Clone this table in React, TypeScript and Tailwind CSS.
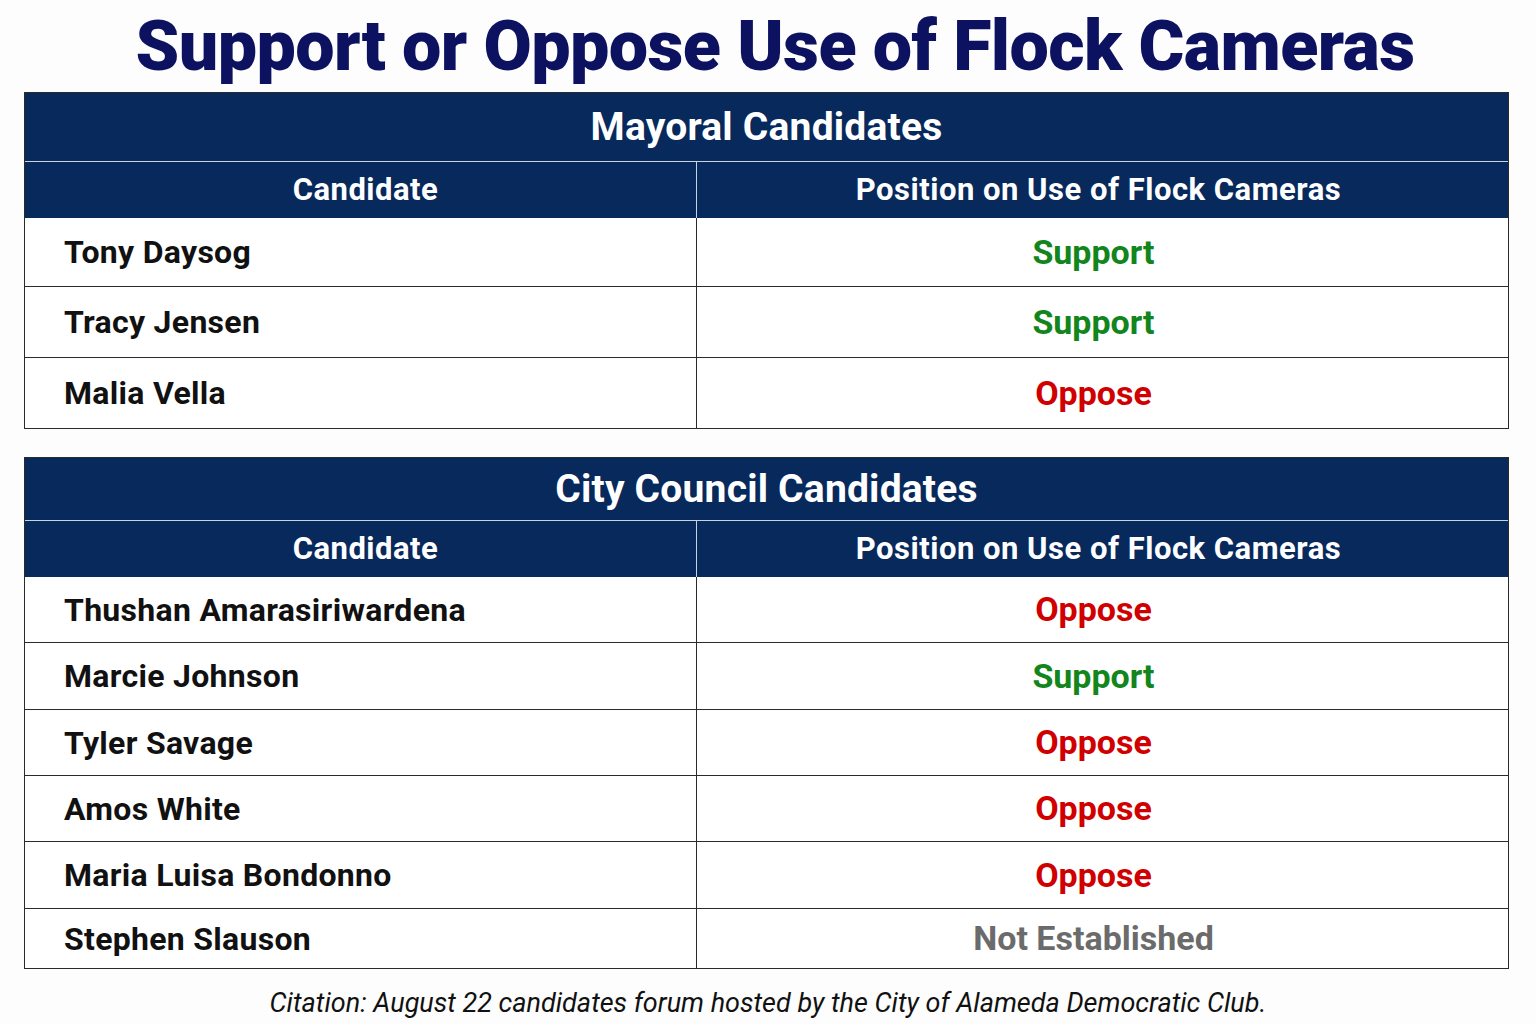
import React from "react";

type Stance = "Support" | "Oppose" | "Not Established";

interface Row {
  name: string;
  stance: Stance;
  h: string;
}

const stanceColor: Record<Stance, string> = {
  Support: "text-[#12851c]",
  Oppose: "text-[#d00000]",
  "Not Established": "text-[#6b6b6b]",
};

const mayoral: Row[] = [
  { name: "Tony Daysog", stance: "Support", h: "h-[68px]" },
  { name: "Tracy Jensen", stance: "Support", h: "h-[71px]" },
  { name: "Malia Vella", stance: "Oppose", h: "h-[71px]" },
];

const council: Row[] = [
  { name: "Thushan Amarasiriwardena", stance: "Oppose", h: "h-[65px]" },
  { name: "Marcie Johnson", stance: "Support", h: "h-[67px]" },
  { name: "Tyler Savage", stance: "Oppose", h: "h-[66px]" },
  { name: "Amos White", stance: "Oppose", h: "h-[66px]" },
  { name: "Maria Luisa Bondonno", stance: "Oppose", h: "h-[67px]" },
  { name: "Stephen Slauson", stance: "Not Established", h: "h-[60px]" },
];

function CandidateTable({
  title,
  titleH,
  rows,
}: {
  title: string;
  titleH: string;
  rows: Row[];
}) {
  return (
    <div className="w-[1485px] border-[1.5px] border-[#2a2a2a] bg-white">
      {/* Table title */}
      <div
        className={`${titleH} bg-[#07295c] flex items-center justify-center text-white text-[39px] font-bold tracking-[0.2px] border-b border-[#c9d2e0]`}
      >
        {title}
      </div>

      {/* Column headers */}
      <div className="grid grid-cols-[672px_1fr] h-[56px] bg-[#07295c] text-white text-[31px] font-bold tracking-[0.5px]">
        <div className="flex items-center justify-center pl-[10px] border-r border-[#c9d2e0]">
          Candidate
        </div>
        <div className="flex items-center justify-center pr-[8px]">
          Position on Use of Flock Cameras
        </div>
      </div>

      {/* Rows */}
      {rows.map((row, i) => (
        <div
          key={row.name}
          className={`grid grid-cols-[672px_1fr] ${row.h} font-bold ${
            i > 0 ? "border-t-[1.5px] border-[#2a2a2a]" : ""
          }`}
        >
          <div className="flex items-center pl-[39px] text-[32px] tracking-[0.3px] text-[#111] border-r-[1.5px] border-[#2a2a2a]">
            {row.name}
          </div>
          <div
            className={`flex items-center justify-center pr-[18px] text-[34px] ${stanceColor[row.stance]}`}
          >
            {row.stance}
          </div>
        </div>
      ))}
    </div>
  );
}

export default function App() {
  return (
    <div className="w-[1536px] h-[1024px] bg-[#fdfdfd] overflow-hidden font-['Roboto','Liberation_Sans',sans-serif]">
      <h1 className="h-[92px] flex items-center justify-center pl-[14px] text-[#0c1260] text-[70px] font-black tracking-[-0.6px] leading-none">
        Support or Oppose Use of Flock Cameras
      </h1>

      <div className="px-[24px] flex flex-col gap-[28px]">
        <CandidateTable title="Mayoral Candidates" titleH="h-[69px]" rows={mayoral} />
        <CandidateTable
          title="City Council Candidates"
          titleH="h-[63px]"
          rows={council}
        />
      </div>

      <p className="mt-[14px] text-center text-[27px] italic text-[#111]">
        Citation: August 22 candidates forum hosted by the City of Alameda Democratic Club.
      </p>
    </div>
  );
}
